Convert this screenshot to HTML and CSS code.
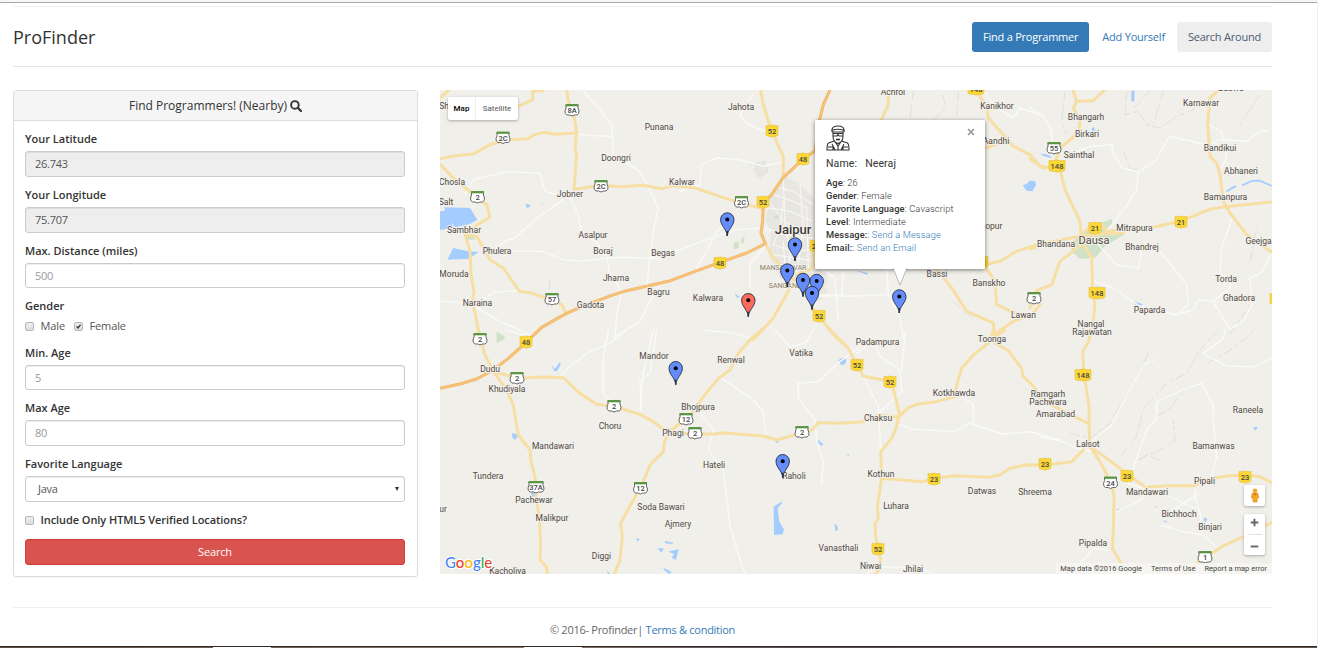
FILE: index.html
```html
<!DOCTYPE html>
<html lang="en">
<head>
<meta charset="utf-8">
<title>ProFinder</title>
<link rel="stylesheet" href="styles.css">
</head>
<body>
<div class="browser-edge"></div>
<div class="page">
  <header class="header">
    <h1 class="brand">ProFinder</h1>
    <nav class="nav">
      <a class="nav-item active">Find a Programmer</a>
      <a class="nav-item">Add Yourself</a>
      <a class="nav-item hover">Search Around</a>
    </nav>
  </header>
  <main class="content">
    <section class="panel">
      <h2 class="panel-heading"><span>Find Programmers! (Nearby)</span>
        <svg class="search-icon" viewBox="0 0 12 12"><circle cx="4.9" cy="4.9" r="3.8" fill="none" stroke="#333" stroke-width="1.9"/><path d="M7.8 7.8L11 11" stroke="#333" stroke-width="2.2" stroke-linecap="round"/></svg>
      </h2>
      <form class="panel-body">
        <label class="label">Your Latitude</label>
        <div class="input readonly">26.743</div>
        <label class="label">Your Longitude</label>
        <div class="input readonly">75.707</div>
        <label class="label">Max. Distance (miles)</label>
        <div class="input short placeholder">500</div>
        <label class="label">Gender</label>
        <div class="checks"><i class="box"></i><span class="male">Male</span><i class="box"><svg viewBox="0 0 9 9"><path d="M2 4.4L3.8 6.4L7.2 2" fill="none" stroke="#333" stroke-width="1.7"/></svg></i><span>Female</span></div>
        <label class="label">Min. Age</label>
        <div class="input short placeholder">5</div>
        <label class="label">Max Age</label>
        <div class="input placeholder">80</div>
        <label class="label">Favorite Language</label>
        <div class="input select"><span>Java</span><i class="caret"></i></div>
        <div class="checks verified"><i class="box"></i><span>Include Only HTML5 Verified Locations?</span></div>
        <button type="button" class="submit">Search</button>
      </form>
    </section>
    <section class="map">
      <svg id="map" class="map-canvas" viewBox="440 90 832 484"></svg>
      <div class="map-types"><b>Map</b><span>Satellite</span></div>
      <div class="info">
        <svg class="avatar" viewBox="0 0 24 26" fill="none" stroke="#333" stroke-width="1.1">
          <path d="M6 7C5 2 9 1 12 1s7 1 6 6M6 5.5Q12 3 18 5.5M6 7h12M7 7v4Q7 17 12 18.5Q17 17 17 11V7M7 8.5h4.500l.5 1 .5-1H17v2.500h-4l-1-1.500-1 1.500H7zM8.500 16L2.500 18Q1 19 1 25h22q0-6-1.500-7L15.500 16M8.500 16L12 21l3.500-5M6 19l3 6M18 19l-3 6M12 21v4M2 22h5v3M22 22h-5v3"/>
          <path d="M10 14.500h4" stroke-width="1.600"/>
        </svg>
        <svg class="close" viewBox="0 0 8 8"><path d="M1 1L7 7M7 1L1 7" stroke="#999" stroke-width="1.700"/></svg>
        <p class="name"><span>Name:</span><span>Neeraj</span></p>
        <p><b>Age</b>: 26</p>
        <p><b>Gender</b>: Female</p>
        <p><b>Favorite Language</b>: Cavascript</p>
        <p><b>Level</b>: Intermediate</p>
        <p><b>Message:</b>: <a>Send a Message</a></p>
        <p><b>Email:</b>: <a>Send an Email</a></p>
        <svg class="tail" viewBox="0 0 16 19"><path d="M1 0L8 17L15 0" fill="#fff" stroke="#aaa" stroke-width=".8"/></svg>
      </div>
      <div class="google"><span class="g-blue">G</span><span class="g-red">o</span><span class="g-yellow">o</span><span class="g-blue">g</span><span class="g-green">l</span><span class="g-red">e</span></div>
      <div class="controls">
        <div class="control"><svg viewBox="0 0 10 16"><circle cx="5" cy="3" r="2.400" fill="#f5a623"/><path d="M2 5.500h6l1 5H7.500L7 15H3l-.5-4.500H1z" fill="#f5a623" stroke="#d58512" stroke-width=".6"/><path d="M3 6l2 2 2-2" fill="#c96c10"/></svg></div>
        <div class="control zoom"><svg viewBox="0 0 9 9"><path d="M4.500.7v7.600M.7 4.500h7.600" stroke="#666" stroke-width="1.900"/></svg><i></i><svg viewBox="0 0 9 9"><path d="M.7 4.500h7.600" stroke="#666" stroke-width="1.900"/></svg></div>
      </div>
      <div class="attribution"><span class="data">Map data ©2016 Google</span><span class="terms">Terms of Use</span><span>Report a map error</span></div>
    </section>
  </main>
  <footer class="footer">© 2016- Profinder| <a>Terms &amp; condition</a></footer>
</div>
<div class="taskbar"><i class="first"></i><i></i></div>
<script src="map.js"></script>
</body>
</html>
```

FILE: styles.css
```css
* { box-sizing: border-box; }
body { margin: 0; width: 1318px; height: 648px; overflow: hidden; display: flex; flex-direction: column; background: #fff; color: #333; font-family: "Open Sans", sans-serif; font-size: 11px; border-right: 1px solid #eee; }
.browser-edge { height: 3px; flex: none; background: #f7f7f7; border-bottom: 1px solid #a9a9a9; }
.page { width: 1259px; margin: 3px 0 0 13px; height: 640px; flex: none; border-top: 1px solid #eee; }
a { color: #337ab7; }
.header { display: flex; justify-content: space-between; height: 60px; padding-top: 15px; border-bottom: 1px solid #e5e5e5; }
.brand { margin: 0; font-size: 18px; font-weight: 400; line-height: 30px; }
.nav { display: flex; gap: 2px; }
.nav-item { height: 30px; padding: 0 11px; border-radius: 3px; line-height: 30px; font-size: 11px; letter-spacing: -.22px; white-space: nowrap; }
.nav-item.active { background: #337ab7; color: #fff; }
.nav-item.hover { background: #eee; color: #4b5c72; margin-left: -1px; }
.content { display: flex; gap: 22px; margin-top: 23px; }
.panel { width: 405px; height: 487px; border: 1px solid #ddd; border-radius: 3px; box-shadow: 0 1px 1px rgba(0,0,0,.05); }
.panel-heading { display: flex; align-items: center; justify-content: center; gap: 3px; height: 30px; margin: 0; background: #f5f5f5; border-bottom: 1px solid #ddd; font-size: 12px; font-weight: 400; }
.search-icon { width: 12px; height: 12px; }
.panel-body { display: flex; flex-direction: column; padding: 10px 12px 0 11px; }
.label { height: 16px; line-height: 16px; margin-bottom: 4px; font-weight: 600; font-size: 11px; }
.input { display: flex; align-items: center; height: 26px; margin-bottom: 10px; padding: 0 9px 1px; border: 1px solid #ccc; border-radius: 3px; box-shadow: inset 0 1px 1px rgba(0,0,0,.075); color: #555; letter-spacing: -.25px; }
.input.short { height: 25px; }
.input.readonly { background: #eee; }
.input.placeholder { color: #999; }
.select { justify-content: space-between; padding: 0 5px 1px 12px; }
.caret { border: 2.500px solid transparent; border-top: 4px solid #333; border-bottom: 0; }
.checks { display: flex; align-items: center; height: 16px; margin-bottom: 11px; color: #555; }
.checks span { position: relative; top: -1px; letter-spacing: -.12px; }
.box { display: flex; width: 9px; height: 9px; margin-right: 6.500px; border: 1px solid #b5b5b5; border-radius: 2px; background: linear-gradient(#eee, #ddd); }
.box svg { width: 7px; height: 7px; overflow: visible; }
.male { margin-right: 9px; }
.verified { color: #333; font-weight: 600; }
.checks.verified span { letter-spacing: -.07px; }
.submit { height: 26px; padding: 0 0 1px; border: 1px solid #d43f3a; border-radius: 3px; background: #d9534f; color: #fff; font: 11px "Open Sans", sans-serif; letter-spacing: -.15px; }
.map { position: relative; width: 832px; height: 484px; overflow: hidden; background: #f0efea; font-family: Roboto, sans-serif; }
.map-canvas { display: block; width: 832px; height: 484px; }
.land-minor { fill: none; stroke: #f9f9f7; stroke-width: 4.500; stroke-linejoin: round; stroke-linecap: round; }
.street { stroke-width: 3; }
.ridge { fill: none; stroke: #dfded9; stroke-width: 3; stroke-dasharray: 30 9 14 5; stroke-linejoin: bevel; }
.major { fill: none; stroke: #f7dfa3; stroke-width: 9; stroke-linejoin: round; stroke-linecap: round; }
.highway-edge { fill: none; stroke: #efb465; stroke-width: 9; stroke-linejoin: round; }
.highway { fill: none; stroke: #f9c379; stroke-width: 5; stroke-linejoin: round; }
.water { fill: #a3ccff; }
.park { fill: #cfe2c7; }
.urban { fill: #e5e3de; opacity: .75; }
.place { font: 8.500px Roboto, sans-serif; fill: #51483f; text-anchor: middle; paint-order: stroke; stroke: #f2f1ed; stroke-width: 2px; stroke-linejoin: round; }
.place.city { font-size: 13px; font-weight: 500; fill: #3f3934; }
.place.town { font-size: 11px; }
.place.suburb { font-size: 7px; fill: #8d8065; }
.shield-text { font: 500 7.500px Roboto, sans-serif; fill: #444; text-anchor: middle; }
.map-types { position: absolute; left: 8px; top: 7px; display: flex; height: 23px; border-radius: 2px; background: #fff; box-shadow: 0 1px 3px rgba(0,0,0,.3); line-height: 23px; font-size: 8px; color: #565656; }
.map-types b { width: 28px; text-align: center; color: #000; font-weight: 500; border-right: 1px solid #eee; }
.map-types span { width: 42px; text-align: center; }
.info { position: absolute; left: 375px; top: 30px; width: 170px; height: 149px; padding: 5px 11px; background: #fff; border-radius: 1px; box-shadow: 0 1px 4px rgba(0,0,0,.5); font-size: 9.300px; letter-spacing: .12px; color: #333; font-weight: 300; }
.avatar { display: block; width: 24px; height: 26px; }
.close { position: absolute; right: 10px; top: 8px; width: 8px; height: 8px; }
.info p { margin: 0; height: 13px; line-height: 14px; white-space: nowrap; }
.info b { font-weight: 500; }
.info .name { display: flex; gap: 8px; height: 25px; line-height: 25px; font-size: 10.500px; font-weight: 400; }
.tail { position: absolute; left: 77px; top: 148px; width: 16px; height: 19px; }
.google { position: absolute; left: 5px; bottom: 2px; font: 500 15px/20px Lato, sans-serif; -webkit-text-stroke: 2px #fff; paint-order: stroke; }
.g-blue { color: #4285f4; } .g-red { color: #ea4335; } .g-yellow { color: #fbbc05; } .g-green { color: #34a853; }
.controls { position: absolute; right: 7px; bottom: 19px; display: flex; flex-direction: column; gap: 8px; }
.control { display: flex; align-items: center; justify-content: center; width: 21px; height: 21px; border-radius: 2px; background: #fff; box-shadow: 0 1px 3px rgba(0,0,0,.3); }
.control svg { width: 10px; height: 15px; }
.control.zoom { flex-direction: column; justify-content: space-around; height: 41px; }
.control.zoom svg { width: 9px; height: 9px; }
.zoom i { width: 14px; height: 1px; background: #e2e2e2; }
.attribution { position: absolute; right: 0; bottom: 0; display: flex; height: 11px; padding: 0 5px 0 4px; line-height: 12px; background: rgba(247,246,243,.8); font-size: 7.500px; color: #444; white-space: nowrap; gap: 9px; }
.footer { margin-top: 30px; padding-top: 13px; border-top: 1px solid #eee; line-height: 18px; text-align: center; color: #666; letter-spacing: -.27px; }
.taskbar { display: flex; gap: 253px; height: 2px; flex: none; margin-right: -1px; background: linear-gradient(90deg, #5c5049, #8a7768 40%, #55505b 60%, #66584e); border-top: 1px solid #332a28; }
.taskbar i { width: 58px; height: 1px; background: #fff; }
.taskbar .first { margin-left: 213px; }
```

FILE: map.js
```js
// Origins of the map sections; shape points inside a section are in thirds of a pixel.
const origins = { A: [440, 88], B: [640, 88], C: [800, 88], D: [1030, 88], E: [440, 330], F: [640, 330], G: [840, 330], H: [1040, 330] };

const urban = [
  ['B', '400,300 430,260 480,290 520,330 560,400 560,620 520,650 470,590 420,570 385,500 395,430 375,400'],
  ['B', '345,225 375,220 385,250 360,275 340,250']
];
const parks = [
  ['A', '80,445 100,440 105,455 82,455'], ['B', '280,465 295,460 297,480 282,483'], ['B', '305,450 314,445 312,462 303,468'],
  ['B', '400,388 412,380 425,380 410,392'], ['B', '495,435 505,425 510,445 500,450'],
  ['D', '120,465 155,440 185,415 245,393 248,408 225,425 285,438 225,475 195,510 150,512 125,490'],
  ['E', '170,5 195,20 190,30 170,40']
];
const water = [
  ['A', '0,370 22,367 38,415 45,418 25,390 12,358 90,360 112,395 90,408 45,418 5,425 0,425'], ['A', '22,515 40,480 85,490 117,492 85,512'],
  ['A', '256,347 272,352 262,362'], ['A', '303,346 308,346 306,350'], ['B', '283,614 299,627 291,630'],
  ['C', '668,292 680,287 690,278 705,280 708,292 697,310 680,308'], ['C', '165,545 205,556 200,560'],
  ['D', '304,10 314,8 312,42 304,38'], ['D', '312,640 336,648 334,658 316,653'], ['D', '185,120 193,118 194,130 187,132'],
  ['D', '29,197 45,198 63,205 62,210 42,204'], ['D', '588,308 615,292 620,296 590,313'],
  ['D', '635,290 665,276 690,275 725,291 725,296 690,281 665,281 637,295'],
  ['E', '335,105 345,117 360,95 362,105 350,124 342,123'], ['E', '218,308 230,313 232,325 222,329 216,320'], ['E', '275,485 290,490 285,500 274,498'],
  ['E', '588,625 600,627 592,635'], ['E', '500,722 515,735 505,735'],
  ['F', '401,530 424,515 426,520 413,535 418,575 432,598 428,613 402,615'], ['F', '595,90 607,83 619,91 612,105 600,98'],
  ['F', '532,328 550,342 545,348 535,340'], ['F', '583,583 590,585 595,600 587,603'], ['F', '75,633 100,638 98,642 76,640'],
  ['F', '85,665 116,657 108,690 95,683 102,672'], ['F', '52,655 71,655 65,668'], ['F', '405,333 418,333 412,340'],
  ['F', '70,714 95,725 88,732 72,720'], ['G', '0,87 17,84 17,98 5,105 0,100'], ['G', '20,372 27,372 25,378'], ['H', '641,291 652,291 650,300 641,299'],
  ['H', '492,564 501,564 499,575 491,573'], ['H', '371,571 380,573 378,579'], ['H', '229,536 237,538 234,544'], ['H', '347,528 352,529 349,534']
];
const minor = [
  ['A', '75,320 100,275 140,265 200,252 300,255 315,310 350,320 390,330'], ['A', '170,480 195,460 225,450 290,390 370,335'],
  ['A', '215,490 305,490 370,515 430,520 500,510 550,508 660,512'], ['A', '430,8 475,60 515,110 520,200 600,250 625,295 655,360 640,430 630,510 620,600'],
  ['A', '410,138 470,143 515,145'], ['A', '390,330 415,380 425,430 470,465 500,505 510,560 545,610 530,680 525,750'], ['A', '0,640 85,645 180,700 270,740'],
  ['A', '110,645 165,612 240,608'], ['A', '525,745 600,700 625,650 660,590'],
  ['B', '340,20 300,80 325,110 380,130'], ['B', '430,222 370,235 300,215 230,210 185,230 180,290 120,310'], ['B', '30,510 120,485 200,455 290,425 360,420'],
  ['B', '265,400 230,430 200,490 165,550'], ['B', '380,470 330,530 330,600'],
  ['C', '550,8 590,60 640,90 660,60 720,80'], ['C', '260,545 265,620 300,690 310,750'], ['C', '60,620 130,625 260,620'], ['C', '60,540 105,570 115,700'],
  ['C', '130,550 125,620 60,625'],
  ['D', '0,60 40,85 65,130 65,200'], ['D', '130,195 180,175 250,170 245,185 275,240 325,252 375,220 418,145 535,172 570,155 650,160 690,130 715,128'],
  ['D', '325,252 320,305 285,360 230,430'], ['D', '330,480 335,500 325,540 260,530 205,470'], ['D', '390,490 430,540 470,590 475,650 440,680 330,655 250,600 190,580'],
  ['D', '440,680 490,665 505,635 550,640 600,600 605,570 570,560 575,480 605,395'], ['D', '725,490 700,550 660,570 665,650 640,700 600,725 550,640'],
  ['D', '533,110 575,130 590,210 575,240'],
  ['E', '365,135 400,100 440,70 510,40 560,0'], ['E', '505,0 490,80 490,190 520,225'], ['E', '640,0 610,130 600,240'], ['E', '195,0 255,15'],
  ['F', '245,145 340,210 370,245 378,315'], ['F', '175,240 220,300 205,360 250,420 270,590 315,735'], ['F', '190,0 280,10 330,25'],
  ['F', '660,50 600,95 535,155 475,160 475,205 525,270 530,330 550,400 545,460'], ['F', '405,0 450,50 475,45 500,35 520,0'], ['F', '50,0 30,130 0,150 5,245'],
  ['G', '70,140 115,230 122,365'], ['G', '175,283 220,298 345,305 385,280 490,312 570,305 660,330'], ['G', '365,200 400,225 400,280'],
  ['G', '115,250 185,185 180,120 120,80 100,35 50,70'], ['G', '185,120 195,10'], ['G', '125,710 245,715 290,735'], ['G', '80,735 100,715'],
  ['H', '0,322 60,332 110,355 160,365'], ['H', '160,330 215,285 250,215 310,105 345,88'], ['H', '340,480 285,520 230,545'], ['H', '120,700 160,655 200,660'],
  ['H', '275,430 320,300 350,265 350,215 440,175 485,160 520,225 520,270 530,380 515,440'], ['H', '465,460 465,500 480,550 485,600'],
  ['H', '340,480 390,500 465,535'], ['H', '360,585 430,605 490,615 525,645'], ['H', '555,0 550,25 490,70 560,108 640,110 695,85'], ['H', '475,490 400,540 365,555'],
  ['H', '330,480 260,460']
];
const streets = [
  ['B', '430,270 435,400 450,500 445,560'], ['B', '405,320 460,340 500,360'], ['B', '390,345 430,400 510,440'], ['B', '385,360 450,370 520,400'],
  ['B', '375,420 430,440 520,450'], ['B', '400,470 460,490 520,485'], ['B', '395,500 470,510 525,520'], ['B', '480,290 490,420 470,560'],
  ['B', '420,300 460,310 520,350'], ['B', '430,340 420,420 400,470'], ['B', '430,460 435,540 520,570'], ['B', '500,360 505,540 560,600']
];
const ridges = [
  ['C', '430,20 435,60 400,100'], ['C', '340,8 330,90'], ['C', '475,10 470,85'], ['C', '460,640 500,680 520,690'],
  ['D', '105,10 95,100 110,140'], ['D', '290,10 285,80 325,70 350,110 390,120 440,85 500,60'], ['D', '280,190 300,240 320,245'], ['D', '360,8 310,60'],
  ['D', '400,8 370,110'], ['D', '690,20 630,110'], ['D', '600,740 680,620'], ['D', '660,520 680,420'], ['A', '330,575 325,640 330,625'],
  ['H', '90,310 150,325 210,280 290,140 330,60'], ['H', '245,375 290,320 310,235 380,160 440,130 480,60 530,5'], ['H', '295,390 370,355 405,330 400,270'],
  ['H', '350,260 390,235 440,170'], ['H', '500,100 580,55 645,0'], ['H', '360,390 320,375 295,390'], ['B', '330,230 375,220 385,250 345,265']
];
const major = [
  ['A', '0,212 45,203 100,198 150,170 210,155 265,152 280,141 312,133 345,139 410,135'],
  ['A', '380,0 383,30 403,90 410,135 405,180 410,200 402,303 430,300 485,291 540,296 610,292 665,302 700,293 765,300 840,325 900,345 968,362'],
  ['A', '0,228 40,270 113,330 140,350 150,388 110,412 75,440 90,490 93,560 102,610 98,640 118,740 135,801 160,851'],
  ['A', '80,440 110,445 130,480 150,515 190,540 238,610 275,615 330,635 365,650 378,675'], ['A', '310,8 278,10 278,35 235,55 180,70'], ['A', '0,30 25,8'],
  ['B', '362,8 370,50 395,130 430,205 430,265'], ['B', '376,467 400,510 430,540 445,560 447,605 400,690 340,755'],
  ['B', '447,560 490,600 520,665 540,690 590,750 610,766'], ['B', '520,490 518,540 470,560'],
  ['E', '160,125 235,145 310,141 370,143 420,190 470,223 520,228 600,253 640,275 670,297'],
  ['E', '160,125 200,180 220,225 235,315 270,360 273,395 285,440 290,520 298,555 302,640 300,690 320,712 322,740'],
  ['F', '370,-5 330,30 295,70 270,120 235,145 190,200 155,250 95,300 75,330 70,365 30,405 10,455 -20,510 -58,580 -53,620 -60,690 -78,735'],
  ['F', '70,297 130,310 220,313 245,308 370,318 410,330 490,308 515,300 535,278 600,280 670,275 715,255 775,262'],
  ['G', '-30,0 10,40 25,55 50,105 70,138 155,155 178,250 170,290 155,325 122,365 125,445 112,530 115,565 105,580 107,620 122,690 120,715 105,735'],
  ['G', '175,262 205,233 230,223 290,215 345,200 350,165 365,115 400,75 450,35 460,0'], ['G', '450,30 495,0'],
  ['G', '460,35 505,62 545,115 548,138 580,168 610,215 650,232 748,282'],
  ['G', '125,445 245,455 285,445 345,437 445,442 480,435 510,415 560,404 615,405 695,395 730,360'],
  ['H', '150,0 148,30 128,65 132,130 147,230 147,290 150,350 200,385 262,432 318,473 330,470 400,467 465,467 490,450 560,438 615,435 660,440 695,458'],
  ['H', '150,350 180,395 215,460 222,500 220,600 217,655 243,700'], ['H', '695,578 640,605 600,625 555,645 480,692 440,730'],
  ['C', '265,8 265,50 245,95'], ['C', '530,8 560,60 565,90 610,140 640,175 690,200 720,235 760,240'], ['C', '555,180 600,165 620,150'],
  ['C', '555,530 600,520 650,490 720,467 750,462'], ['C', '555,535 585,580 590,650 655,680'], ['C', '400,530 455,600 500,670 580,705 585,750'],
  ['C', '720,650 695,680 640,700 575,745'],
  ['D', '130,8 140,40 130,60 150,100 145,135 90,180 70,235 40,240 0,212'], ['D', '140,40 190,38 222,8'],
  ['D', '90,245 105,305 150,400 155,460 185,510 188,610 195,650 185,740'], ['D', '0,483 60,462 150,445 215,438 280,435'], ['D', '150,445 180,415 215,410 235,435'],
  ['D', '230,430 370,418 450,400 545,362 600,355 725,342'], ['D', '565,8 540,30 533,110 540,205 560,225 570,260 580,340 600,375 650,440 725,492'],
  ['D', '155,470 90,520 65,590 20,608 0,660']
];
const highways = [
  ['A', '0,901 60,888 110,873 160,846 205,811 258,764 305,718 378,677 440,650 515,622 560,608 685,580 765,550 840,523 920,495 976,467 963,435 968,400 970,345 995,320 1030,268 1088,215 1125,188'],
  ['B', '525,188 538,98 550,50 570,6']
];

const places = [
  ['Achrol', 893, 92], ['Kanikhor', 997, 106], ['Karnawar', 1201, 103], ['Jahota', 741, 107], ['Punana', 659, 127], ['Doongri', 616, 158],
  ['Kalwar', 682, 182], ['Jobner', 570, 194], ['Chosla', 452, 182], ['Salt', 446, 202], ['Sambhar', 464, 230], ['Phulera', 497, 251],
  ['Asalpur', 593, 235], ['Boraj', 603, 251], ['Begas', 663, 253], ['Jharna', 616, 278], ['Moruda', 454, 274], ['Naraina', 477.5, 303],
  ['Gadota', 590.5, 305], ['Bagru', 658.5, 292], ['Kalwara', 708, 298], ['MANSAROVAR', 783, 267, 'suburb'], ['SANGANER', 787, 285, 'suburb'],
  ['Jaipur', 793, 229, 'city'], ['Aandhi', 996, 141], ['Bhangarh', 1086, 117], ['Birkari', 1087, 134], ['Sainthal', 1079, 154.5],
  ['Bandikui', 1220, 148], ['Abhaneri', 1241, 171], ['Bamanpura', 1225.5, 197], ['Mitrapura', 1134.5, 228], ['Bhandana', 1056, 244],
  ['Dausa', 1094, 241, 'town'], ['Bhandrej', 1142, 247], ['Geejga', 1258.5, 241], ['Torda', 1226, 278.5], ['Ghadora', 1239, 298],
  ['Paparda', 1149.5, 310], ['Nangal', 1091, 323.5], ['Rajawatan', 1092, 332], ['Dopur', 991, 226], ['Bassi', 937, 274], ['Banskho', 989, 283],
  ['Lawan', 1023.5, 315], ['Toonga', 992, 339], ['Padampura', 877.5, 342], ['Vatika', 801, 353], ['Renwal', 731, 360], ['Mandor', 654, 356],
  ['Dudu', 490, 369], ['Khudiyala', 507, 389], ['Bhojpura', 698, 407], ['Choru', 610, 426], ['Phagi', 673, 433], ['Hateli', 714, 465],
  ['Mandawari', 553, 446], ['Tundera', 488, 476], ['Pachewar', 534, 500], ['Malikpur', 552, 518], ['Soda Bawari', 661, 507], ['Ajmery', 678, 524],
  ['Diggi', 601.5, 556], ['Kacholiya', 507.5, 571], ['Raholi', 794, 476], ['Vanasthali', 838.5, 548], ['Niwai', 870.5, 566], ['Jhilai', 913, 569],
  ['Luhara', 896, 506], ['Kothun', 881, 474], ['Chaksu', 878, 418], ['Kotkhawda', 954, 393], ['Ramgarh', 1048, 394], ['Pachwara', 1048, 402],
  ['Amarabad', 1055.5, 414], ['Lalsot', 1088, 444], ['Datwas', 982, 491], ['Shreema', 1035, 491.5], ['Mandawari', 1147, 491.5],
  ['Pipali', 1204.5, 481], ['Raneela', 1248, 410], ['Bamanwas', 1213.5, 446], ['Bichhoch', 1179, 514], ['Binjari', 1210, 526.5],
  ['Pipalda', 1093, 543], ['ur', 443, 509], ['Sh', 444, 106], ['Baswa', 1231, 88]
];
const stateRoads = [
  ['8A', 572, 110], ['2C', 503, 137.5], ['2C', 601, 186], ['2C', 741.5, 202], ['2', 477.5, 197], ['57', 552, 299], ['2', 480, 339],
  ['2', 517, 378], ['2', 614, 406], ['12', 686, 419], ['2', 695, 433], ['2', 802, 432], ['37A', 536, 487], ['12', 640.5, 488],
  ['24', 1110.5, 482.5], ['1', 1205, 557], ['55', 1054, 148], ['2', 1034, 298]
];
const nationalRoads = [
  ['52', 772, 131], ['48', 803, 159], ['52', 763, 202], ['48', 720, 263], ['48', 526, 342], ['52', 819, 316], ['21', 816, 246], ['52', 857, 365],
  ['52', 890, 382], ['52', 878, 549], ['23', 934, 479], ['23', 1045, 464], ['23', 1127, 476], ['23', 1245, 477], ['148', 1083, 375],
  ['148', 1097, 293], ['148', 1057, 166], ['21', 1095, 228], ['21', 1181, 222], ['148', 976, 89], ['21', 982, 262], ['', 1276, 299]
];
const pins = [
  [727.3, 236], [795, 261], [787.3, 287], [803, 296.5], [816.7, 297.5], [812, 309.5], [748.3, 316.7, '#fb6a5c'], [899.3, 313], [675.7, 384.7], [782.7, 477.7]
];

const shapes = (tag, cls, list) => list.map(([o, pts]) =>
  `<g transform="translate(${origins[o]}) scale(.33333)"><${tag} class="${cls}" points="${pts}"/></g>`).join('');

const shield = ([num, x, y], national) => {
  const w = num.length > 2 ? 8 : national ? 6 : 7;
  const body = national
    ? `<path d="M${-w} -5.5Q${-w / 2} -5 0 -6Q${w / 2} -5 ${w} -5.500V3Q${w} 5 ${w - 2} 5.200Q2 5 0 6.200Q-2 5 ${2 - w} 5.200Q${-w} 5 ${-w} 3z" fill="#fcd735" stroke="#e3bd3b" stroke-width=".6"/>`
    : `<path d="M${1 - w} -5H${w - 1}Q${w - 1.6} -2 ${w} 1Q${w + .3} 4 ${w - 2} 5Q2 4.500 0 6Q-2 4.500 ${2 - w} 5Q${-w - .3} 4 ${-w} 1Q${1.6 - w} -2 ${1 - w} -5z" fill="#fff" stroke="#666" stroke-width="1"/><path d="M${.5 - w} -4.800H${w - .5}" stroke="#569440" stroke-width="2.200"/>`;
  return `<g transform="translate(${x} ${y})">${body}<text class="shield-text" y="3">${num}</text></g>`;
};

const pin = ([x, y, fill = '#648cfa']) =>
  `<g transform="translate(${x} ${y})"><path d="M0 0C-.5 -7 -6.700 -10 -6.700 -16.500A6.700 6.700 0 0 1 6.700 -16.500C6.700 -10 .5 -7 0 0z" fill="${fill}" stroke="#26303f" stroke-width=".9"/><path d="M0 0V-5" stroke="#26303f" stroke-width="1.400"/><circle cy="-16.500" r="2" fill="#000"/></g>`;

document.getElementById('map').innerHTML =
  shapes('polygon', 'urban', urban) + shapes('polygon', 'park', parks) + shapes('polyline', 'ridge', ridges) +
  shapes('polygon', 'water', water) + shapes('polyline', 'land-minor', minor) + shapes('polyline', 'land-minor street', streets) +
  shapes('polyline', 'major', major) + shapes('polyline', 'highway-edge', highways) + shapes('polyline', 'highway', highways) +
  places.map(([name, x, y, kind = '']) => `<text class="place ${kind}" x="${x}" y="${y + (kind === 'city' ? 4.5 : 3)}">${name}</text>`).join('') +
  stateRoads.map(s => shield(s, false)).join('') + nationalRoads.map(s => shield(s, true)).join('') + pins.map(pin).join('');
```
